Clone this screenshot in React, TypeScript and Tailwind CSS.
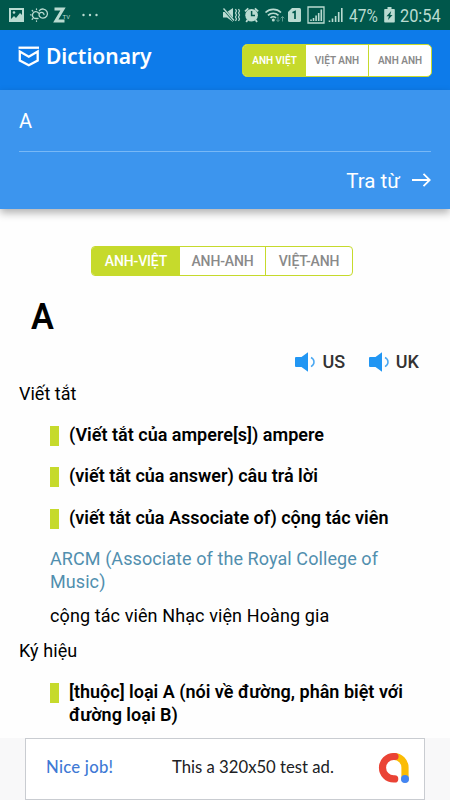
import clsx from "clsx";

type TabGroupProps = {
  tabs: string[];
  size: "small" | "large";
};

const headerTabs = ["ANH VIỆT", "VIỆT ANH", "ANH ANH"];
const resultTabs = ["ANH-VIỆT", "ANH-ANH", "VIỆT-ANH"];
const meanings = [
  "(Viết tắt của ampere[s]) ampere",
  "(viết tắt của answer) câu trả lời",
  "(viết tắt của Associate of) cộng tác viên",
];

const LeftStatusIcons = () => (
  <svg width="102" height="30" viewBox="0 0 102 30" fill="none">
    <path
      fillRule="evenodd"
      fill="#b9dbd1"
      d="M9 8h15v14H9zM11 10v9l3-3 2 2 4-5 2 2v-5z"
    />
    <circle cx="14" cy="12.500" r="1.300" fill="#b9dbd1" />
    <g stroke="#b9dbd1" strokeWidth="1.300" strokeLinecap="round">
      <path d="M38 18.500h-2a3.400 3.400 0 1 1 2.500-5.500M36.500 9v.5M32.200 10.500l.5.5M30.500 14.800h.6M32.200 19.300l.5-.5M36.500 21v.3" />
      <path d="M44 14.500a2.500 2.500 0 1 0-4.200 2.200q1 1.500 3 1.500a4.600 4.600 0 1 0-3.500-7.500" />
    </g>
    <path d="M54.500 9h8.500L55.800 21h8.700" stroke="#b9dbd1" strokeWidth="3" />
    <text x="62.500" y="18.500" fill="#b9dbd1" fontSize="6" fontFamily="Roboto">
      TV
    </text>
    <g fill="#b9dbd1">
      <circle cx="83.500" cy="15" r="1.200" />
      <circle cx="90" cy="15" r="1.200" />
      <circle cx="96.500" cy="15" r="1.200" />
    </g>
  </svg>
);

const RightStatusIcons = () => (
  <svg width="124" height="30" viewBox="221 0 124 30" fill="none">
    <path fill="#b9dbd1" d="M223 12h4l6-4v14l-6-4.500h-4z" />
    <path d="M223 8l11 13" stroke="#00574b" strokeWidth="2.600" />
    <path d="M223.500 8.500l10.500 12" stroke="#b9dbd1" strokeWidth="1.300" />
    <path
      d="M235.500 9l1 2-1 2 1 2-1 2 1 2-1 2M238.500 9l1 2-1 2 1 2-1 2 1 2-1 2"
      stroke="#b9dbd1"
      strokeWidth="1.200"
    />
    <circle cx="251.600" cy="15.200" r="6.300" fill="#b9dbd1" />
    <path
      d="M245 11.300l3.300-3M258.200 11.300l-3.300-3M247.500 20l-1.300 2M255.700 20l1.300 2"
      stroke="#b9dbd1"
      strokeWidth="1.800"
    />
    <path d="M251.600 11v4.500h3.400" stroke="#00574b" strokeWidth="1.500" />
    <g stroke="#b9dbd1" strokeWidth="1.700">
      <path d="M265.500 12.500a11 11 0 0 1 15.500 0" />
      <path d="M268 15.400a7.500 7.500 0 0 1 10.500 0" />
      <path d="M270.500 18a4 4 0 0 1 5.500 0" />
    </g>
    <circle cx="273.300" cy="20" r="1.500" fill="#b9dbd1" />
    <path
      d="M278 16.500v5m-1.800-1.800l1.800 1.800 1.800-1.800M282.500 21.500v-5m-1.800 1.800l1.800-1.800 1.800 1.800"
      stroke="#5d9c8f"
      strokeWidth="1"
    />
    <path
      fill="#b9dbd1"
      d="M292 8h7.500a1.500 1.500 0 0 1 1.500 1.500v11a1.500 1.500 0 0 1-1.500 1.500h-10a1.500 1.500 0 0 1-1.500-1.500V12z"
    />
    <path d="M292.500 12.700l2.500-1.200v7.500" stroke="#00574b" strokeWidth="1.700" />
    <path d="M308 7h16v16h-16z" stroke="#b9dbd1" strokeWidth="1.300" />
    <path
      d="M311 21v-1.500M313.500 21v-3M316.100 21v-5.500M318.700 21v-8M321.300 21V9.500"
      stroke="#b9dbd1"
      strokeWidth="1.600"
    />
    <path
      d="M329.500 22v-1.500M332.500 22v-3.500M335.600 22v-6M338.700 22v-10M341.800 22V8"
      stroke="#b9dbd1"
      strokeWidth="1.600"
    />
  </svg>
);

const BatteryIcon = () => (
  <svg width="11" height="16" viewBox="0 0 11 16">
    <path
      fill="#b9dbd1"
      d="M3.500 0h4v2H10a.8.8 0 0 1 .8.8v12a.8.8 0 0 1-.8.8H1a.8.8 0 0 1-.8-.8v-12A.8.8 0 0 1 1 2h2.500z"
    />
    <path fill="#00574b" d="M7.200 4L2.500 9.300h2.400L4 13l4.500-5H6.200z" />
  </svg>
);

const Logo = () => (
  <svg
    width="22"
    height="21"
    viewBox="0 0 22 21"
    fill="none"
    stroke="white"
    strokeWidth="2.300"
  >
    <path d="M.5 1.700h20.500" />
    <path d="M1.800 5.500v9l9 4.700 8.900-4.700v-9l-8.900 5.200z" />
  </svg>
);

const Speaker = () => (
  <svg width="20" height="20" viewBox="0 0 20 20" fill="none">
    <path
      fill="#2196f3"
      d="M1 5h5.500L13 .3v19.400L6.500 15H1a1 1 0 0 1-1-1V6a1 1 0 0 1 1-1z"
    />
    <path
      d="M16 5.500c4 2 4 7 0 9.200"
      stroke="#4ba8f2"
      strokeWidth="1.500"
    />
  </svg>
);

const AdLogo = () => (
  <svg
    width="32"
    height="32"
    viewBox="0 0 32 32"
    fill="none"
    strokeWidth="7.200"
    strokeLinecap="round"
  >
    <path d="M16 4.500a11 11 0 0 1 11 11V27" stroke="#fbbc04" />
    <path d="M17 4.500h-1.300a11.200 11.200 0 0 0 0 22.400h1" stroke="#ea4335" />
    <circle cx="27" cy="27" r="4" fill="#4285f4" />
  </svg>
);

const TabGroup: React.FC<TabGroupProps> = ({ tabs, size }) => (
  <div
    className={clsx(
      "grid overflow-hidden border border-[#c6da2c] bg-white",
      size === "small"
        ? "h-[33px] w-[190px] grid-cols-[63px_62px_1fr] rounded-[5px] text-[10px] font-semibold"
        : "h-[30px] w-[262px] grid-cols-[88px_85px_1fr] rounded text-sm font-medium tracking-[-0.15px]",
    )}
  >
    {tabs.map((tab, index) => (
      <button
        key={tab}
        className={clsx(
          "flex items-center justify-center whitespace-nowrap",
          index === 0 ? "bg-[#c6da2c] text-white" : "text-[#8a8a8a]",
          index === 2 && "border-l border-[#c6da2c]",
        )}
      >
        {tab}
      </button>
    ))}
  </div>
);

const Meaning: React.FC<{ children: React.ReactNode }> = ({ children }) => (
  <li className="flex gap-[10px]">
    <span className="mt-[3px] h-5 w-[9px] shrink-0 bg-[#c6da2c]" />
    <p className="whitespace-nowrap text-lg leading-[23px] font-semibold">
      {children}
    </p>
  </li>
);

const App = () => {
  return (
    <div className="flex h-[800px] w-[450px] flex-col overflow-hidden bg-[#fefefe] font-['Roboto',sans-serif] text-black">
      <div className="flex h-[30px] shrink-0 justify-between bg-[#00574b] text-[#b9dbd1]">
        <LeftStatusIcons />
        <div className="flex items-center pr-[10px]">
          <RightStatusIcons />
          <span className="ml-1 w-[30px] origin-left scale-x-[0.86] pt-px whitespace-nowrap text-lg">
            47%
          </span>
          <span className="ml-[5px]">
            <BatteryIcon />
          </span>
          <span className="ml-[5px] w-10 origin-left scale-x-[0.86] pt-0.5 whitespace-nowrap text-[19px]">
            20:54
          </span>
        </div>
      </div>

      <header className="flex h-[60px] shrink-0 items-center justify-between bg-[#0d7bea] pr-[18px] pl-[18px]">
        <div className="flex items-center gap-[6px] pb-[7px]">
          <Logo />
          <h1 className="pb-0.5 font-['Noto_Sans',sans-serif] text-[21px] leading-6 font-semibold text-white">
            Dictionary
          </h1>
        </div>
        <TabGroup tabs={headerTabs} size="small" />
      </header>

      <section className="flex h-[119px] shrink-0 flex-col bg-[#3c95ee] px-[19px] text-white shadow-[0_4px_8px_rgba(0,0,0,0.3)]">
        <div className="h-[62px] border-b border-[#78b8f6] pt-[19px] text-xl leading-6">
          A
        </div>
        <button className="mt-[17px] flex items-center gap-[11px] self-end text-[20.500px] leading-6">
          <span>Tra từ</span>
          <svg
            width="20"
            height="16"
            viewBox="0 0 20 16"
            fill="none"
            stroke="white"
            strokeWidth="1.800"
          >
            <path d="M1 7h18M12.500.800L18.800 7l-6.300 6.200" />
          </svg>
        </button>
      </section>

      <main className="flex-1 overflow-hidden">
        <div className="mt-[37px] ml-[91px]">
          <TabGroup tabs={resultTabs} size="large" />
        </div>
        <h2 className="mt-[21px] ml-[31px] origin-left scale-x-95 text-[36px] leading-10 font-semibold">
          A
        </h2>
        <div className="mt-[15px] mr-[31px] flex justify-end gap-[23px] text-lg leading-5 font-medium text-[#333]">
          <button className="flex items-center gap-[7px]">
            <Speaker />
            <span className="w-6">US</span>
          </button>
          <button className="flex items-center gap-[7px]">
            <Speaker />
            UK
          </button>
        </div>
        <h3 className="mt-[10px] ml-[19px] text-lg leading-[23px]">Viết tắt</h3>
        <ul className="mt-[18px] ml-[50px] flex flex-col gap-[18.400px]">
          {meanings.map((meaning) => (
            <Meaning key={meaning}>{meaning}</Meaning>
          ))}
        </ul>
        <p className="mt-[18px] ml-[50px] text-lg leading-[23px] tracking-[0.08px] whitespace-nowrap text-[#518fae]">
          ARCM (Associate of the Royal College of
          <br />
          Music)
        </p>
        <p className="mt-[11px] ml-[50px] text-lg leading-[23px] tracking-[0.1px]">
          cộng tác viên Nhạc viện Hoàng gia
        </p>
        <h3 className="mt-3 ml-[19px] text-lg leading-[23px] tracking-[0.1px]">
          Ký hiệu
        </h3>
        <ul className="mt-[18px] ml-[50px]">
          <Meaning>
            [thuộc] loại A (nói về đường, phân biệt với
            <br />
            đường loại B)
          </Meaning>
        </ul>
      </main>

      <footer className="flex h-[62px] shrink-0 justify-center bg-[#f8f8f9]">
        <div className="flex w-[400px] items-center border border-[#c9ccd1] bg-white pl-[20px] pb-0.5 font-['Lato',sans-serif] text-[16.700px]">
          <span className="w-[126px] font-medium tracking-[0.25px] text-[#3f7ad5]">
            Nice job!
          </span>
          <span className="w-[206px] whitespace-nowrap text-[#202124]">
            This a 320x50 test ad.
          </span>
          <AdLogo />
        </div>
      </footer>
    </div>
  );
};

export default App;
